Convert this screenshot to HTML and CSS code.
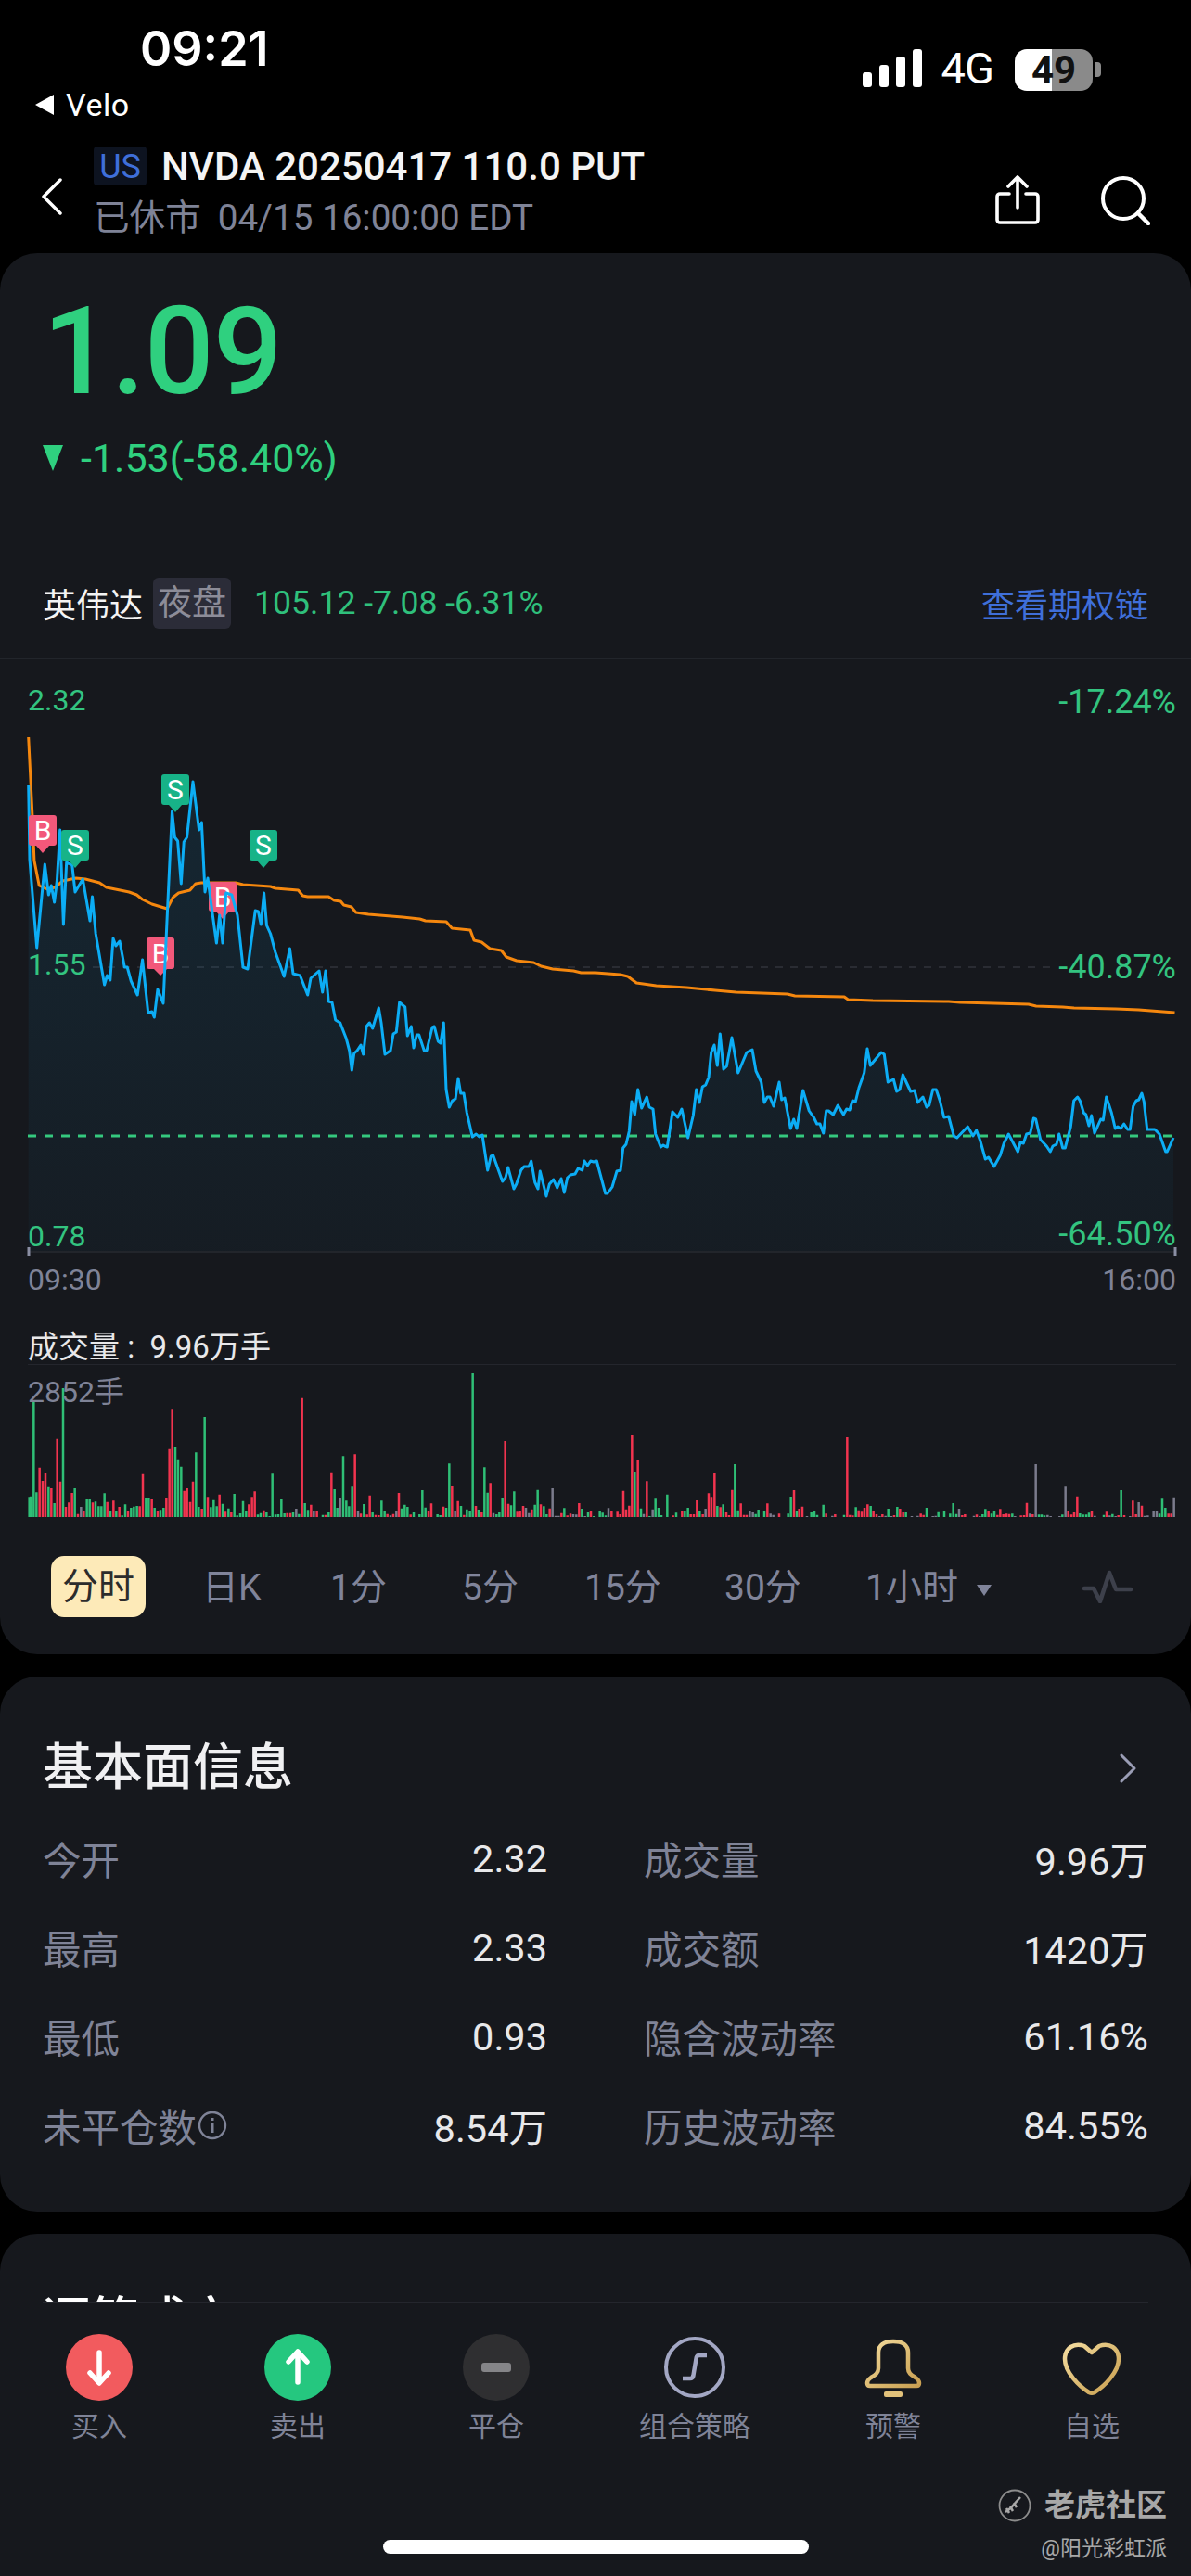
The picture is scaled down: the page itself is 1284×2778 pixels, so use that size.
FILE: index.html
```html
<!DOCTYPE html>
<html lang="zh-CN">
<head>
  <meta charset="UTF-8" />
  <meta name="viewport" content="width=device-width, initial-scale=1.0"/>
  <title>NVDA 20250417 110.0 PUT</title>
  <link rel="stylesheet" href="styles.css">
</head>
<body>
  <div class="status">
    <div class="status-left">
      <div class="clock">09:21</div>
      <div class="velo"><span class="velo-arrow"></span>Velo</div>
    </div>
    <div class="status-right">
      <svg class="signal" width="65" height="41" viewBox="0 0 65 41"><rect x="0" y="25" width="10" height="16" rx="3"/><rect x="18" y="17" width="10" height="24" rx="3"/><rect x="36" y="8" width="10" height="33" rx="3"/><rect x="54" y="0" width="10" height="41" rx="3"/></svg>
      <span class="net">4G</span>
      <span class="battery">49</span>
      <span class="battery-cap"></span>
    </div>
  </div>

  <header class="topbar">
    <svg class="back" width="24" height="40" viewBox="0 0 24 40"><path d="M21 2 3 20l18 18" fill="none" stroke="#fff" stroke-width="3.5" stroke-linecap="round" stroke-linejoin="round"/></svg>
    <div class="topbar-title">
      <div class="title-line"><span class="us">US</span><span class="title">NVDA 20250417 110.0 PUT</span></div>
      <div class="subtitle"><span>已休市</span><span>04/15 16:00:00 EDT</span></div>
    </div>
    <svg class="share" width="50" height="54" viewBox="0 0 50 54"><path d="M25 3v32M15 12 25 2l10 10M16 20H6a3 3 0 0 0-3 3v25a3 3 0 0 0 3 3h38a3 3 0 0 0 3-3V23a3 3 0 0 0-3-3H34" fill="none" stroke="#fff" stroke-width="3.6" stroke-linecap="round" stroke-linejoin="round"/></svg>
    <svg class="search" width="54" height="54" viewBox="0 0 54 54"><circle cx="25" cy="25" r="22" fill="none" stroke="#fff" stroke-width="4"/><path d="m41 41 11 11" stroke="#fff" stroke-width="4.5" stroke-linecap="round"/></svg>
  </header>

  <main class="card quote">
    <div class="price">1.09</div>
    <div class="change"><span class="down-arrow"></span>-1.53(-58.40%)</div>
    <div class="underlying">
      <span class="u-name">英伟达</span>
      <span class="u-tag">夜盘</span>
      <span class="u-nums">105.12 -7.08 -6.31%</span>
      <span class="u-link">查看期权链</span>
    </div>

    <div class="chart">
      <svg class="chart-svg" width="1284" height="645" viewBox="0 710 1284 645">
        <defs>
          <linearGradient id="areaFill" x1="0" y1="840" x2="0" y2="1350" gradientUnits="userSpaceOnUse">
            <stop offset="0" stop-color="#0cadf5" stop-opacity=".1"/>
            <stop offset="1" stop-color="#0cadf5" stop-opacity=".03"/>
          </linearGradient>
        </defs>
        <path d="M100 1043H1135" stroke="#2a2c33" stroke-width="2" stroke-dasharray="8 8"/>
        <polygon fill="url(#areaFill)" points="30.7,1350 30.7,847 32,927 39.7,1022 48.3,932 52.4,965 55.3,955 58.6,973 61.4,950 64.7,895 68.4,997 71.7,930 77.8,933 81,962 89.3,948 97,993 99.5,967 103.2,1007 112.6,1062 115.5,1052 118.8,1057 122,1012 124.9,1020 129,1015 134.3,1043 137.2,1043 141.3,1058 148.2,1073 153.6,1035 159.7,1092 163.8,1091 166.3,1097 170,1067 176,1082 180,993 185.5,875 188.4,903 191.6,907 195.3,953 198.2,908 201.5,903 208,843 214.6,895 217.4,887 221,962 224,947 229.3,987 233.4,1017 236.7,987 240,1017 243.7,963 249.8,965 256,987 262,1043 267,1045 275.2,982 278.5,983 281.3,997 284.6,963 287.5,998 291.6,1007 296.9,1027 306.3,1053 312.4,1023 316,1050 323.5,1052 331.7,1073 335,1055 344,1047 347.7,1070 351,1047 354.2,1080 358,1081 361.7,1100 366.7,1103 373.3,1120 376.7,1133 379.3,1154 381.7,1136 385,1133 389,1127 391.7,1137 395,1107 398.3,1103 401.7,1109 408.3,1087 411,1103 415,1137 421,1133 424,1115 427.3,1113 430.7,1081 436.7,1086 439.3,1117 443.3,1107 446,1130 449.3,1116 451.7,1116 457.3,1133 460,1133 466,1108 468.3,1107 472.3,1123 475,1125 478.3,1103 481,1175 484.3,1194 487.7,1187 491,1185 494,1163 496.7,1179 500,1179 503.3,1200 509.3,1226 513.3,1223 516.7,1226 520,1224 525.7,1262 529.3,1247 531.7,1246 541.7,1274 545,1270 547.7,1259 554,1282 556.7,1277 561.7,1262 565,1258 570,1258 572.7,1252 576.7,1275 580,1282 582.3,1263 589,1290 592.3,1277 596.7,1272 600.7,1281 605,1271 608.3,1286 611.7,1270 615,1267 620,1266 623.3,1260 627.7,1262 630,1252 633.3,1257 636.7,1252 640,1253 643.3,1252 652.7,1287 655,1287 660,1280 665,1263 669,1262 671.7,1238 675,1234 678.3,1220 681,1188 684.3,1202 687.7,1175 691.7,1195 697.3,1183 700,1194 704,1196 706.7,1223 712.3,1237 715,1235 716.7,1236 719.3,1237 725,1199 730.7,1205 735,1196 741.7,1227 747.3,1203 750.7,1175 754,1189 757.3,1172 760.7,1170 764,1162 766.7,1135 770,1127 773.3,1149 776.3,1115 780,1153 783.3,1150 789,1119 795.7,1157 805,1135 811,1132 815,1155 820.7,1167 824,1189 827.3,1183 830,1183 834,1193 840,1167 842.7,1186 846,1184 852.3,1217 855.7,1207 859,1217 865.7,1176 872.3,1198 877.3,1205 880.7,1212 884,1212 887.7,1222 890.7,1198 893.3,1198 898.3,1202 903.3,1192 909.3,1202 912.7,1196 916,1197 919,1187 922.3,1188 926,1173 931.7,1157 935,1131 938.3,1149 950,1135 953.3,1137 957.3,1167 963.3,1164 966.7,1177 970,1175 973.3,1159 981.7,1177 986,1176 989.3,1189 995,1183 999,1194 1001.7,1192 1005.7,1175 1009.3,1175 1013.3,1187 1017.7,1205 1022.7,1204 1028.3,1225 1031.7,1227 1043.3,1215 1049,1225 1052.7,1219 1056.7,1230 1062.3,1250 1065.7,1248 1071.7,1258 1078.3,1246 1082.3,1233 1087.3,1223 1097.3,1242 1100,1232 1103.3,1233 1106.7,1223 1110.7,1222 1114.3,1206 1116.7,1207 1121.7,1229 1128.3,1236 1132.3,1242 1135,1236 1139,1234 1141.7,1223 1145.7,1238 1148.3,1238 1154.3,1215 1157.7,1187 1161.7,1183 1164.3,1187 1168.3,1200 1170.7,1202 1174,1214 1176.7,1203 1180,1222 1186.7,1207 1189.3,1208 1192.7,1183 1198.3,1200 1202.3,1217 1205,1215 1208.3,1217 1211.7,1212 1215.7,1218 1218.3,1218 1221.7,1193 1225,1187 1227.7,1186 1231,1179 1233.3,1188 1236.7,1218 1245,1218 1250,1223 1256.7,1242 1258.3,1242 1265,1227 1265,1350"/>
        <polyline class="line-avg" points="30.7,795 34.8,877 36.9,928 42.2,955 51.2,959 59.4,957 67.6,950 81.9,947 92.1,948 107.3,952 114.7,957 139.2,962 147.4,965 153.6,970 163.8,975 180.2,980 186.3,968 192.5,963 204.8,960 210.9,953 217,952 253.9,952 262,954 291.6,956 296.9,958 321.5,960 326.4,966 331.7,967 354.2,967 360.3,971 367.3,972 370.6,976 378.8,978 383.7,984 397.2,986 421.8,988 434,989 452.5,991 458.7,993 481.1,994 487.3,1001 507,1003 511,1014 519.2,1016 528.2,1023 540.5,1025 545.9,1032 556.9,1036 575.3,1038 583.5,1042 595.8,1045 618.3,1047 626.5,1049 642,1049 668.6,1051 676.8,1053 686.2,1060 707.5,1063 740.3,1065 771,1068 793.5,1070 848.8,1072 857,1074 910.2,1075 914.3,1078 941,1079 1022.8,1080 1035,1081 1108.8,1083 1117,1085 1145.7,1086 1158,1087 1203,1088 1227.6,1089 1266.5,1092"/>
        <g class="pin pin-b"><path d="M161 1011h24a3 3 0 0 1 3 3v28a3 3 0 0 1-3 3h-5l-7 7-7-7h-5a3 3 0 0 1-3-3v-28a3 3 0 0 1 3-3z"/><text x="173" y="1039">B</text></g>
        <g class="pin pin-b"><path d="M228 951h24a3 3 0 0 1 3 3v26a3 3 0 0 1-3 3h-5l-7 8-7-8h-5a3 3 0 0 1-3-3v-26a3 3 0 0 1 3-3z"/><text x="240" y="978">B</text></g>
        <path class="line-zero" d="M30 1225H1268"/>
        <polyline class="line-price" points="30.7,847 32,927 39.7,1022 48.3,932 52.4,965 55.3,955 58.6,973 61.4,950 64.7,895 68.4,997 71.7,930 77.8,933 81,962 89.3,948 97,993 99.5,967 103.2,1007 112.6,1062 115.5,1052 118.8,1057 122,1012 124.9,1020 129,1015 134.3,1043 137.2,1043 141.3,1058 148.2,1073 153.6,1035 159.7,1092 163.8,1091 166.3,1097 170,1067 176,1082 180,993 185.5,875 188.4,903 191.6,907 195.3,953 198.2,908 201.5,903 208,843 214.6,895 217.4,887 221,962 224,947 229.3,987 233.4,1017 236.7,987 240,1017 243.7,963 249.8,965 256,987 262,1043 267,1045 275.2,982 278.5,983 281.3,997 284.6,963 287.5,998 291.6,1007 296.9,1027 306.3,1053 312.4,1023 316,1050 323.5,1052 331.7,1073 335,1055 344,1047 347.7,1070 351,1047 354.2,1080 358,1081 361.7,1100 366.7,1103 373.3,1120 376.7,1133 379.3,1154 381.7,1136 385,1133 389,1127 391.7,1137 395,1107 398.3,1103 401.7,1109 408.3,1087 411,1103 415,1137 421,1133 424,1115 427.3,1113 430.7,1081 436.7,1086 439.3,1117 443.3,1107 446,1130 449.3,1116 451.7,1116 457.3,1133 460,1133 466,1108 468.3,1107 472.3,1123 475,1125 478.3,1103 481,1175 484.3,1194 487.7,1187 491,1185 494,1163 496.7,1179 500,1179 503.3,1200 509.3,1226 513.3,1223 516.7,1226 520,1224 525.7,1262 529.3,1247 531.7,1246 541.7,1274 545,1270 547.7,1259 554,1282 556.7,1277 561.7,1262 565,1258 570,1258 572.7,1252 576.7,1275 580,1282 582.3,1263 589,1290 592.3,1277 596.7,1272 600.7,1281 605,1271 608.3,1286 611.7,1270 615,1267 620,1266 623.3,1260 627.7,1262 630,1252 633.3,1257 636.7,1252 640,1253 643.3,1252 652.7,1287 655,1287 660,1280 665,1263 669,1262 671.7,1238 675,1234 678.3,1220 681,1188 684.3,1202 687.7,1175 691.7,1195 697.3,1183 700,1194 704,1196 706.7,1223 712.3,1237 715,1235 716.7,1236 719.3,1237 725,1199 730.7,1205 735,1196 741.7,1227 747.3,1203 750.7,1175 754,1189 757.3,1172 760.7,1170 764,1162 766.7,1135 770,1127 773.3,1149 776.3,1115 780,1153 783.3,1150 789,1119 795.7,1157 805,1135 811,1132 815,1155 820.7,1167 824,1189 827.3,1183 830,1183 834,1193 840,1167 842.7,1186 846,1184 852.3,1217 855.7,1207 859,1217 865.7,1176 872.3,1198 877.3,1205 880.7,1212 884,1212 887.7,1222 890.7,1198 893.3,1198 898.3,1202 903.3,1192 909.3,1202 912.7,1196 916,1197 919,1187 922.3,1188 926,1173 931.7,1157 935,1131 938.3,1149 950,1135 953.3,1137 957.3,1167 963.3,1164 966.7,1177 970,1175 973.3,1159 981.7,1177 986,1176 989.3,1189 995,1183 999,1194 1001.7,1192 1005.7,1175 1009.3,1175 1013.3,1187 1017.7,1205 1022.7,1204 1028.3,1225 1031.7,1227 1043.3,1215 1049,1225 1052.7,1219 1056.7,1230 1062.3,1250 1065.7,1248 1071.7,1258 1078.3,1246 1082.3,1233 1087.3,1223 1097.3,1242 1100,1232 1103.3,1233 1106.7,1223 1110.7,1222 1114.3,1206 1116.7,1207 1121.7,1229 1128.3,1236 1132.3,1242 1135,1236 1139,1234 1141.7,1223 1145.7,1238 1148.3,1238 1154.3,1215 1157.7,1187 1161.7,1183 1164.3,1187 1168.3,1200 1170.7,1202 1174,1214 1176.7,1203 1180,1222 1186.7,1207 1189.3,1208 1192.7,1183 1198.3,1200 1202.3,1217 1205,1215 1208.3,1217 1211.7,1212 1215.7,1218 1218.3,1218 1221.7,1193 1225,1187 1227.7,1186 1231,1179 1233.3,1188 1236.7,1218 1245,1218 1250,1223 1256.7,1242 1258.3,1242 1265,1227"/>
        <g class="pin pin-b"><path d="M34 879h24a3 3 0 0 1 3 3v27a3 3 0 0 1-3 3h-5l-7 8-7-8h-5a3 3 0 0 1-3-3v-27a3 3 0 0 1 3-3z"/><text x="46" y="906">B</text></g>
        <g class="pin pin-s"><path d="M69 895h24a3 3 0 0 1 3 3v27a3 3 0 0 1-3 3h-5l-7 8-7-8h-5a3 3 0 0 1-3-3v-27a3 3 0 0 1 3-3z"/><text x="81" y="922">S</text></g>
        <g class="pin pin-s"><path d="M177 835h24a3 3 0 0 1 3 3v27a3 3 0 0 1-3 3h-5l-7 8-7-8h-5a3 3 0 0 1-3-3v-27a3 3 0 0 1 3-3z"/><text x="189" y="862">S</text></g>
        <g class="pin pin-s"><path d="M272 895h24a3 3 0 0 1 3 3v27a3 3 0 0 1-3 3h-5l-7 8-7-8h-5a3 3 0 0 1-3-3v-27a3 3 0 0 1 3-3z"/><text x="284" y="922">S</text></g>
        <path d="M31 1350H1268" stroke="#22252b" stroke-width="2"/>
        <path d="M31 1345v11M1267 1345v11" stroke="#8a8ea3" stroke-width="3"/>
      </svg>
      <span class="axis axis-l" id="p-high">2.32</span>
      <span class="axis axis-l" id="p-mid">1.55</span>
      <span class="axis axis-l" id="p-low">0.78</span>
      <span class="axis axis-r" id="r-high">-17.24%</span>
      <span class="axis axis-r" id="r-mid">-40.87%</span>
      <span class="axis axis-r" id="r-low">-64.50%</span>
    </div>

    <div class="times"><span>09:30</span><span>16:00</span></div>

    <div class="vol-head">成交量 :&nbsp; 9.96万手</div>
    <div class="volume">
      <span class="vol-max">2852手</span>
      <svg class="vol-svg" width="1284" height="169" viewBox="0 33 3852 507">
        <g>
          <path class="bar-g" d="M95 525V460M100 525V458M109 525V150M118 525V445M157 525V428M176 525V480M204 525V108M242 525V432M281 525V468M290 525V468M309 525V475M319 525V490M328 525V490M338 525V448M357 525V505M376 525V505M395 525V520M405 525V484M424 525V495M433 525V491M443 525V489M472 525V465M481 525V462M500 525V495M519 525V502M529 525V495M567 525V300M576 525V338M586 525V362M634 525V316M643 525V492M662 525V201M682 525V493M691 525V470M701 525V490M720 525V482M739 525V497M758 525V450M767 525V520M777 525V513M786 525V473M796 525V505M834 525V517M843 525V512M862 525V510M872 525V522M881 525V385M891 525V517M900 525V516M910 525V468M920 525V513M948 525V510M967 525V515M986 525V480M996 525V502M1044 525V518M1063 525V510M1082 525V435M1091 525V495M1110 525V328M1120 525V472M1129 525V490M1139 525V427M1177 525V483M1205 525V510M1234 525V472M1244 525V507"/>
          <path class="bar-r" d="M128 525V365M138 525V408M147 525V382M166 525V432M185 525V272M195 525V410M213 525V492M223 525V478M233 525V447M252 525V515M271 525V505M300 525V478M347 525V476M367 525V472M386 525V492M414 525V505M452 525V490M462 525V386M491 525V468M510 525V505M538 525V463M548 525V305M557 525V178M596 525V440M605 525V432M615 525V476M624 525V410M653 525V498M672 525V460M710 525V452M729 525V508M748 525V510M805 525V484M815 525V460M824 525V442M853 525V503M929 525V512M939 525V512M977 525V140M1006 525V485M1025 525V507M1053 525V518M1072 525V380M1148 525V322M1167 525V514M1187 525V517M1196 525V455M1215 525V518M1225 525V519M1253 525V515M1272 525V515"/>
          <path class="bar-n" d="M262 525V492M958 525V498M1015 525V507M1100 525V465M1158 525V507M1263 525V520M1282 525V507"/>
        </g>
        <g transform="translate(1290 0)">
          <path class="bar-g" d="M9 525V497M19 525V485M28 525V492M48 525V510M67 525V516M76 525V438M86 525V494M125 525V516M134 525V519M153 525V495M163 525V352M201 525V489M220 525V500M230 525V505M239 525V60M258 525V501M277 525V364M287 525V446M316 525V516M325 525V510M335 525V465M363 525V487M373 525V442M440 525V485M449 525V437M469 525V490M478 525V516M535 525V496M592 525V498M612 525V510M631 525V522M650 525V507M659 525V511M669 525V520M763 525V378M783 525V497M811 525V522M830 525V466M840 525V495M849 525V519M868 525V452M897 525V511M925 525V505M935 525V495M973 525V505M1030 525V489M1049 525V484M1087 525V354M1097 525V503M1154 525V515M1163 525V501M1182 525V507M1259 525V514M1268 525V459M1287 525V505"/>
          <path class="bar-r" d="M0 525V447M38 525V517M96 525V507M105 525V481M144 525V491M172 525V424M191 525V473M211 525V518M249 525V489M268 525V510M296 525V415M344 525V279M354 525V482M383 525V508M392 525V507M402 525V489M430 525V500M459 525V484M488 525V497M526 525V512M545 525V520M555 525V514M583 525V480M621 525V507M688 525V505M707 525V508M716 525V516M726 525V440M735 525V500M745 525V488M754 525V258M773 525V339M802 525V409M887 525V520M916 525V505M944 525V516M954 525V516M964 525V471M983 525V516M1002 525V448M1011 525V460M1021 525V384M1040 525V493M1059 525V510M1068 525V519M1078 525V437M1106 525V481M1116 525V518M1125 525V518M1192 525V481M1230 525V514M1278 525V438"/>
          <path class="bar-n" d="M182 525V505M306 525V512M411 525V495M421 525V512M497 525V432M507 525V521M517 525V521M564 525V516M574 525V517M602 525V522M678 525V496M792 525V515M821 525V500M992 525V498M1135 525V507M1145 525V510M1202 525V514M1211 525V518"/>
        </g>
        <g transform="translate(2580 0)">
          <path class="bar-g" d="M44 525V510M54 525V507M63 525V518M83 525V485M150 525V518M188 525V493M236 525V489M293 525V498M322 525V492M350 525V510M417 525V495M455 525V509M474 525V507M493 525V514M503 525V480M513 525V515M598 525V516M607 525V499M627 525V514M636 525V507M694 525V514M780 525V517M789 525V517M798 525V520M856 525V517M913 525V513M923 525V517M933 525V517M942 525V511M990 525V518M1018 525V515M1046 525V438M1170 525V514M1179 525V466M1189 525V495"/>
          <path class="bar-r" d="M5 525V498M15 525V491M92 525V514M121 525V516M160 525V267M169 525V518M178 525V520M197 525V503M207 525V508M216 525V495M226 525V484M245 525V506M255 525V516M274 525V516M312 525V519M331 525V498M341 525V510M398 525V514M407 525V518M532 525V519M541 525V516M579 525V517M617 525V507M646 525V518M655 525V499M665 525V516M675 525V514M684 525V515M722 525V520M732 525V519M741 525V479M760 525V516M875 525V504M885 525V517M894 525V510M904 525V458M951 525V507M999 525V508M1037 525V519M1056 525V519M1084 525V472M1094 525V516M1113 525V488M1199 525V514M1208 525V514"/>
          <path class="bar-n" d="M30 525V522M112 525V521M265 525V522M284 525V521M303 525V522M369 525V522M388 525V521M437 525V522M446 525V521M522 525V498M570 525V521M589 525V522M703 525V522M751 525V514M770 525V354M808 525V518M818 525V522M847 525V522M866 525V427M961 525V521M1009 525V520M1028 525V522M1075 525V522M1103 525V477M1122 525V521M1132 525V520M1151 525V504M1161 525V504M1217 525V461"/>
        </g>
      </svg>
    </div>

    <div class="periods">
      <span class="period active">分时</span>
      <span class="period">日K</span>
      <span class="period">1分</span>
      <span class="period">5分</span>
      <span class="period">15分</span>
      <span class="period">30分</span>
      <span class="period">1小时<i class="caret"></i></span>
      <svg class="wave" width="54" height="36" viewBox="0 0 54 36"><path d="M2 20h10l7 14L29 3l7 18h16" fill="none" stroke="#3d404b" stroke-width="4.5" stroke-linejoin="round" stroke-linecap="round"/></svg>
    </div>
  </main>

  <section class="card basics">
    <div class="basics-head">
      <h2>基本面信息</h2>
      <svg width="18" height="32" viewBox="0 0 18 32"><path d="m2 2 14 14L2 30" fill="none" stroke="#9a9db5" stroke-width="3" stroke-linecap="round" stroke-linejoin="round"/></svg>
    </div>
    <div class="stats">
      <div class="stat"><span>今开</span><b>2.32</b></div>
      <div class="stat"><span>成交量</span><b>9.96万</b></div>
      <div class="stat"><span>最高</span><b>2.33</b></div>
      <div class="stat"><span>成交额</span><b>1420万</b></div>
      <div class="stat"><span>最低</span><b>0.93</b></div>
      <div class="stat"><span>隐含波动率</span><b>61.16%</b></div>
      <div class="stat"><span>未平仓数<svg class="info" width="32" height="32" viewBox="0 0 32 32"><circle cx="16" cy="16" r="14" fill="none" stroke="#7f8397" stroke-width="2.4"/><path d="M16 14v10M16 8v3" stroke="#7f8397" stroke-width="3"/></svg></span><b>8.54万</b></div>
      <div class="stat"><span>历史波动率</span><b>84.55%</b></div>
    </div>
  </section>

  <section class="card bottom">
    <div class="cut-head"><div>逐笔成交</div></div>
    <nav class="actions">
      <div class="action">
        <svg width="72" height="72" viewBox="0 0 72 72"><circle cx="36" cy="36" r="36" fill="#f25b5e"/><path d="M36 20v32M26 42l10 11 10-11" fill="none" stroke="#fff" stroke-width="5.5" stroke-linecap="round" stroke-linejoin="round"/></svg>
        <span>买入</span>
      </div>
      <div class="action">
        <svg width="72" height="72" viewBox="0 0 72 72"><circle cx="36" cy="36" r="36" fill="#25c77f"/><path d="M36 52V20M26 30l10-11 10 11" fill="none" stroke="#fff" stroke-width="5.5" stroke-linecap="round" stroke-linejoin="round"/></svg>
        <span>卖出</span>
      </div>
      <div class="action">
        <svg width="72" height="72" viewBox="0 0 72 72"><circle cx="36" cy="36" r="36" fill="#2f2f31"/><rect x="20" y="31" width="32" height="10" rx="3" fill="#858588"/></svg>
        <span>平仓</span>
      </div>
      <div class="action">
        <svg width="72" height="72" viewBox="0 0 72 72"><circle cx="36" cy="36" r="31" fill="none" stroke="#a3a7c4" stroke-width="4"/><path d="M23 48h8c2 0 3-1 3.400-3l3.200-19c.3-2 1.400-3 3.400-3h8" fill="none" stroke="#a3a7c4" stroke-width="4.500" stroke-linejoin="round"/></svg>
        <span>组合策略</span>
      </div>
      <div class="action">
        <svg width="72" height="72" viewBox="0 0 72 72"><defs><linearGradient id="gold" x1="0" y1="0" x2="1" y2="1"><stop offset="0" stop-color="#f4dca0"/><stop offset=".6" stop-color="#d9b66c"/><stop offset="1" stop-color="#c99f52"/></linearGradient></defs><path d="M20 20c0-8 6-12 16-12s16 4 16 12v17c0 5 3 7 8 10 3 2 4 4 4 6 0 2-1 3-3 3H11c-2 0-3-1-3-3 0-2 1-4 4-6 5-3 8-5 8-10z" fill="none" stroke="url(#gold)" stroke-width="4.500" stroke-linejoin="round"/><rect x="26" y="62" width="20" height="6" rx="2" fill="#e2c27b"/></svg>
        <span>预警</span>
      </div>
      <div class="action">
        <svg width="72" height="72" viewBox="0 0 72 72"><path d="M36 20 28 13C17 9 7 15 7 27c0 14 15 29 26 36 2 1 4 1 6 0 11-7 26-22 26-36 0-12-10-18-21-14z" fill="none" stroke="url(#gold)" stroke-width="4.500" stroke-linejoin="round"/></svg>
        <span>自选</span>
      </div>
    </nav>
  </section>

  <div class="watermark">
    <div class="wm-top">
      <svg width="36" height="38" viewBox="0 0 36 38"><circle cx="18" cy="19" r="16.500" fill="none" stroke="#8c8c8c" stroke-width="1.800"/><path d="M8 26c3-2 6-4 8-7l8-9M9 22l3 5M13 20l3 5M17 16l3 5" fill="none" stroke="#a8a8a8" stroke-width="2.500"/></svg>
      <span>老虎社区</span>
    </div>
    <div class="wm-user">@阳光彩虹派</div>
  </div>
  <div class="home-bar"></div>
</body>
</html>
```

FILE: styles.css
```css
* {
  box-sizing: border-box;
}

html, body {
  margin: 0;
  padding: 0;
}

body {
  position: relative;
  width: 1284px;
  height: 2778px;
  overflow: hidden;
  background-color: #000;
  color: #fff;
  font-family: Roboto, 'Noto Sans CJK SC', sans-serif;
}

/* status bar */
.status {
  display: flex;
  justify-content: space-between;
  height: 150px;
  padding: 22px 97px 0 38px;
}

.clock {
  margin-left: 113px;
  font-family: Inter, sans-serif;
  font-size: 52px;
  font-weight: 600;
  line-height: 62px;
}

.velo {
  display: flex;
  align-items: center;
  gap: 13px;
  margin-top: 11px;
  font-size: 34px;
  line-height: 36px;
  letter-spacing: .5px;
}

.velo-arrow {
  width: 0;
  height: 0;
  border-top: 11px solid transparent;
  border-bottom: 11px solid transparent;
  border-right: 20px solid #fff;
}

.status-right {
  display: flex;
  align-items: flex-start;
  padding-top: 31px;
}

.signal {
  margin-left: -4px;
  fill: #fff;
}

.net {
  margin: -1px 0 0 20px;
  font-size: 47px;
  line-height: 44px;
  letter-spacing: -1px;
}

.battery {
  width: 84px;
  height: 45px;
  margin-left: 23px;
  border-radius: 13px;
  background: linear-gradient(90deg, #fff 0 48%, #8a8a8a 48% 100%);
  color: #111;
  font-size: 42px;
  font-weight: 700;
  line-height: 46px;
  text-align: center;
}

.battery-cap {
  width: 6px;
  height: 16px;
  margin: 14px 0 0 3px;
  border-radius: 0 4px 4px 0;
  background-color: #8a8a8a;
}

/* header */
.topbar {
  display: flex;
  align-items: center;
  height: 123px;
  padding: 0 44px 0 44px;
}

.topbar-title {
  flex: 1;
  margin-left: 33px;
}

.title-line {
  display: flex;
  align-items: center;
  gap: 16px;
  height: 44px;
  margin-top: -8px;
}

.us {
  width: 57px;
  height: 42px;
  border-radius: 4px;
  background-color: #0d1320;
  color: #3f6fd9;
  font-size: 36px;
  line-height: 44px;
  text-align: center;
}

.title {
  font-size: 42px;
  font-weight: 500;
  color: #f4f4f4;
}

.subtitle {
  display: flex;
  gap: 18px;
  margin-top: 11px;
  color: #7f8397;
  font-size: 38.6px;
  line-height: 46px;
}

.share {
  margin: 8px 64px 0 0;
}

.search {
  margin-top: 8px;
}

/* cards */
.card {
  background-color: #16181d;
  border-radius: 40px;
}

.quote {
  height: 1511px;
  padding-top: 40px;
}

.price {
  padding-left: 46px;
  color: #2fd07f;
  font-size: 132px;
  font-weight: 500;
  line-height: 132px;
  letter-spacing: -1px;
}

.change {
  display: flex;
  align-items: center;
  gap: 19px;
  height: 56px;
  margin-top: 21px;
  padding-left: 46px;
  color: #2fd07f;
  font-size: 43px;
}

.down-arrow {
  width: 0;
  height: 0;
  border-left: 11px solid transparent;
  border-right: 11px solid transparent;
  border-top: 28px solid #2fd07f;
}

.underlying {
  display: flex;
  align-items: center;
  height: 56px;
  margin-top: 100px;
  padding: 0 46px;
  font-size: 36px;
}

.u-name {
  color: #f4f4f4;
}

.u-tag {
  width: 84px;
  height: 55px;
  margin: 0 25px 0 11px;
  border-radius: 6px;
  background-color: #2b2c38;
  color: #8c8c98;
  font-size: 37px;
  line-height: 55px;
  text-align: center;
}

.u-nums {
  flex: 1;
  color: #2fc07c;
  font-size: 35.6px;
}

.u-link {
  color: #3f6fd9;
}

/* price chart */
.chart {
  position: relative;
  height: 645px;
  margin-top: 32px;
  border-top: 1px solid #22252b;
}

.chart-svg {
  display: block;
  margin-top: -1px;
}

.chart-svg polyline {
  fill: none;
  stroke-width: 3;
  stroke-linejoin: round;
}

.line-price {
  stroke: #0cadf5;
}

.line-avg {
  stroke: #f5870e;
}

.line-zero {
  stroke: #35c97f;
  stroke-width: 3;
  stroke-dasharray: 9 9;
}

.pin text {
  fill: #fff;
  font-family: Roboto, sans-serif;
  font-size: 30px;
  text-anchor: middle;
}

.pin-b path {
  fill: #f2587a;
}

.pin-s path {
  fill: #17b388;
}

.axis {
  position: absolute;
  color: #33c480;
  font-size: 32px;
  line-height: 36px;
}

.axis-l {
  left: 30px;
}

.axis-r {
  right: 16px;
  font-size: 36px;
}

#p-high { top: 26px; }
#p-mid { top: 311px; }
#p-low { top: 604px; }
#r-high { top: 28px; }
#r-mid { top: 314px; }
#r-low { top: 602px; }

.times {
  display: flex;
  justify-content: space-between;
  height: 40px;
  margin-top: 4px;
  padding: 0 16px 0 30px;
  color: #7f8397;
  font-size: 32px;
  line-height: 42px;
}

/* volume */
.vol-head {
  height: 42px;
  margin: 31px 16px 0 30px;
  border-bottom: 1px solid #24262d;
  color: #e8e8ea;
  font-size: 33px;
  line-height: 46px;
}

.volume {
  position: relative;
  height: 169px;
}

.vol-svg {
  display: block;
}

.vol-svg path {
  fill: none;
  stroke-width: 7.5;
}

.bar-g {
  stroke: #2fbf76;
}

.bar-r {
  stroke: #f2344f;
}

.bar-n {
  stroke: #7b7b8c;
}

.vol-max {
  position: absolute;
  left: 30px;
  top: 9px;
  color: #7f8397;
  font-size: 32px;
  line-height: 40px;
}

/* periods */
.periods {
  display: grid;
  grid-template-columns: 163px 138px 142px 132px 151px 152px 234px auto;
  align-items: center;
  height: 66px;
  margin-top: 37px;
  padding-left: 55px;
  color: #80849a;
  font-size: 39px;
}

.period {
  margin-bottom: 6px;
}

.period.active {
  width: 102px;
  height: 66px;
  margin-bottom: 0;
  border-radius: 14px;
  background-color: #fdeab8;
  color: #2c2c2c;
  line-height: 66px;
  text-align: center;
}

.caret {
  display: inline-block;
  margin: 0 0 4px 20px;
  border-left: 8px solid transparent;
  border-right: 8px solid transparent;
  border-top: 12px solid #80849a;
}

/* basics card */
.basics {
  height: 577px;
  margin-top: 24px;
  padding: 0 46px;
}

.basics-head {
  display: flex;
  align-items: center;
  justify-content: space-between;
  height: 198px;
  padding-right: 13px;
}

.basics-head h2 {
  margin: 0;
  color: #f0f0f2;
  font-size: 54px;
  font-weight: 500;
  line-height: 60px;
}

.stats {
  display: grid;
  grid-template-columns: 544px 544px;
  column-gap: 104px;
  margin-top: -50px;
}

.stat {
  display: flex;
  align-items: center;
  justify-content: space-between;
  height: 96px;
  color: #7f8397;
  font-size: 41.5px;
}

.stat span {
  display: flex;
  align-items: center;
}

.stat b {
  color: #e8e8ea;
  font-weight: 400;
}

.info {
  margin-left: 1px;
}

/* bottom card */
.bottom {
  height: 369px;
  margin-top: 24px;
  border-radius: 40px 40px 0 0;
}

.cut-head {
  height: 75px;
  margin: 0 46px;
  overflow: hidden;
  border-bottom: 1px solid #24262d;
}

.cut-head div {
  margin-top: 64px;
  font-size: 52px;
  font-weight: 500;
  line-height: 60px;
}

.actions {
  display: grid;
  grid-template-columns: repeat(6, 214px);
  margin-top: 33px;
}

.action {
  display: flex;
  flex-direction: column;
  align-items: center;
  gap: 8px;
  color: #7f8397;
  font-size: 30px;
  line-height: 40px;
}

.action svg {
  display: block;
}

/* overlays */
.watermark {
  position: absolute;
  right: 26px;
  top: 2680px;
  color: #a8a8a8;
  text-align: right;
}

.wm-top {
  display: flex;
  align-items: center;
  gap: 14px;
  font-size: 33px;
  font-weight: 700;
  line-height: 44px;
}

.wm-user {
  margin-top: 9px;
  font-size: 23px;
  line-height: 32px;
}

.home-bar {
  position: absolute;
  left: 413px;
  top: 2739px;
  width: 459px;
  height: 15px;
  border-radius: 8px;
  background-color: #fff;
}
```
